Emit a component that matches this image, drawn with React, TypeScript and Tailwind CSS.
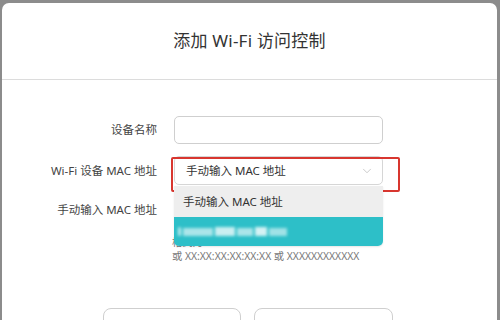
import { ChevronDown } from "lucide-react";

const font = { fontFamily: '"Noto Sans", "Noto Sans CJK SC", sans-serif' };

const App = () => {
  return (
    <div className="w-[500px] h-[320px] overflow-hidden bg-[#8c8c8c] pt-[3px] pl-[2px] pr-[3px]" style={font}>
      <div className="relative h-[340px] bg-white rounded-t-[7px]">
        {/* Header */}
        <div className="h-[77px] flex items-center justify-center border-b border-[#dcdcdc]">
          <span className="text-[17px] text-[#333] tracking-[0.2px]">添加 Wi-Fi 访问控制</span>
        </div>

        {/* Form */}
        <div className="pt-[36px] flex flex-col">
          <div className="flex items-center h-[28px]">
            <div className="w-[155px] text-right text-[11.5px] text-[#444]">设备名称</div>
            <div className="ml-[17px] w-[209px] h-[28px] rounded-[5px] border border-[#cfcfcf]" />
          </div>

          <div className="relative flex items-center h-[29px] mt-[12px]">
            <div className="w-[155px] text-right text-[11.5px] text-[#444]">Wi-Fi 设备 MAC 地址</div>
            <div className="ml-[17px] w-[209px] h-[29px] rounded-[5px] border border-[#d6d6d6] flex items-center justify-between pl-[11px] pr-[8px]">
              <span className="text-[11.5px] text-[#333]">手动输入 MAC 地址</span>
              <ChevronDown className="w-[14px] h-[14px] text-[#b5b5b5]" strokeWidth={1.2} />
            </div>
            {/* annotation */}
            <div className="absolute left-[169px] top-[1px] w-[229px] h-[35px] border-[2px] border-[#d8362f] rounded-[2px]" />
            {/* dropdown */}
            <div className="absolute left-[172px] top-[30px] w-[209px] z-10 rounded-b-[5px] overflow-hidden shadow-[0_1px_2px_rgba(0,0,0,0.1)]">
              <div className="h-[31px] bg-[#eeeeee] flex items-center pl-[9px] text-[11.5px] text-[#333]">手动输入 MAC 地址</div>
              <div className="h-[29px] bg-[#2dbfc8] flex items-center pl-[4px]">
                <div className="flex items-center gap-[2px] blur-[1.5px]">
                  <span className="w-[3px] h-[9px] bg-white/70 rounded-full" />
                  <span className="w-[30px] h-[8px] bg-white/60" />
                  <span className="w-[20px] h-[9px] bg-white/75" />
                  <span className="w-[16px] h-[8px] bg-white/60" />
                  <span className="w-[12px] h-[9px] bg-white/80" />
                  <span className="w-[18px] h-[8px] bg-white/55" />
                </div>
              </div>
            </div>
          </div>

          <div className="flex items-center h-[28px] mt-[11px]">
            <div className="w-[155px] text-right text-[11.5px] text-[#444]">手动输入 MAC 地址</div>
            <div className="ml-[17px] w-[209px] h-[28px] rounded-[5px] border border-[#cfcfcf]" />
          </div>

          <div className="ml-[170px] mt-[11px] text-[10.3px] leading-[14px] text-[#777]">
            <div>格式为 XX-XX-XX-XX-XX-XX</div>
            <div>或 XX:XX:XX:XX:XX:XX 或 XXXXXXXXXXXX</div>
          </div>

          <div className="flex gap-[13px] ml-[101px] mt-[45px]">
            <div className="w-[138px] h-[32px] rounded-[8px] border border-[#cfcfcf]" />
            <div className="w-[139px] h-[32px] rounded-[8px] border border-[#cfcfcf]" />
          </div>
        </div>
      </div>
    </div>
  );
};

export default App;
